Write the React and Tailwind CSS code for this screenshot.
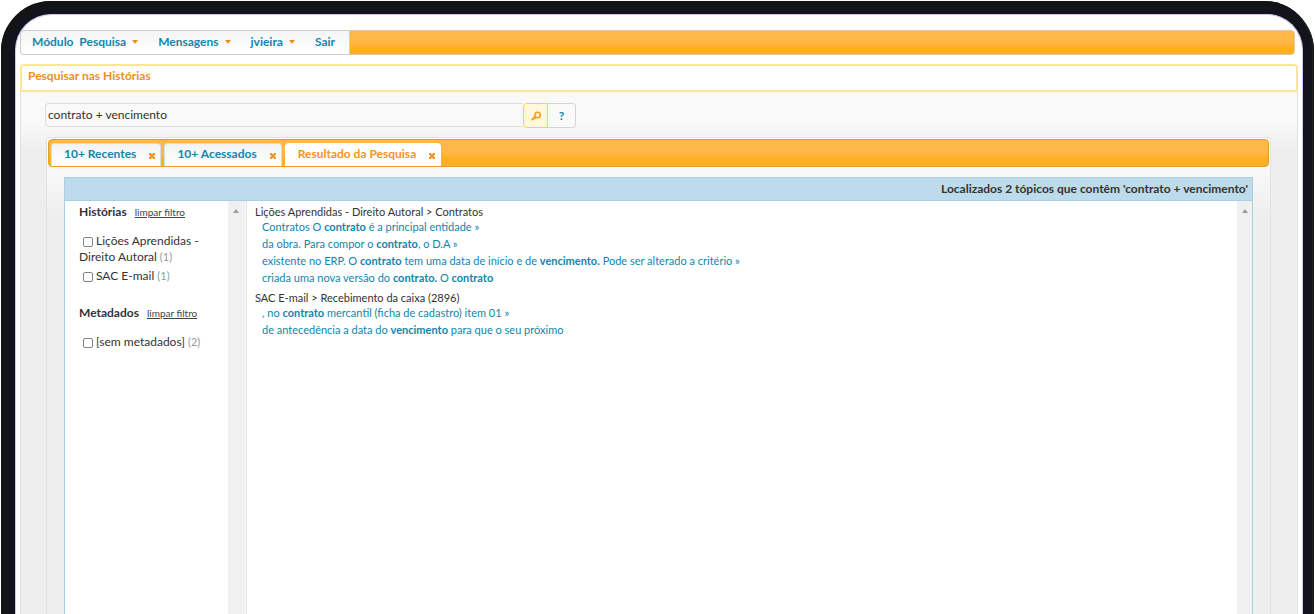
import React from "react";

const menuItems = [
  { label: "Módulo  Pesquisa", hasMenu: true },
  { label: "Mensagens", hasMenu: true },
  { label: "jvieira", hasMenu: true },
  { label: "Sair", hasMenu: false },
];

const tabs = [
  { label: "10+ Recentes", active: false },
  { label: "10+ Acessados", active: false },
  { label: "Resultado da Pesquisa", active: true },
];

const results = [
  {
    title: "Lições Aprendidas - Direito Autoral > Contratos",
    excerpts: [
      <>Contratos O <b>contrato</b> é a principal entidade »</>,
      <>da obra. Para compor o <b>contrato</b>, o D.A »</>,
      <>existente no ERP. O <b>contrato</b> tem uma data de início e de <b>vencimento.</b> Pode ser alterado a critério »</>,
      <>criada uma nova versão do <b>contrato.</b> O <b>contrato</b></>,
    ],
  },
  {
    title: "SAC E-mail > Recebimento da caixa (2896)",
    excerpts: [
      <>, no <b>contrato</b> mercantil (ficha de cadastro) item 01 »</>,
      <>de antecedência a data do <b>vencimento</b> para que o seu próximo</>,
    ],
  },
];

function Caret() {
  return (
    <svg viewBox="0 0 6 4" className="h-1 w-1.5 fill-[#f58d1e]" aria-hidden="true">
      <path d="M0 0h6L3 4z" />
    </svg>
  );
}

function SearchIcon() {
  return (
    <svg viewBox="0 0 12 12" className="size-3 fill-none stroke-[#ff9a1f]" aria-hidden="true">
      <circle cx="7.6" cy="5" r="2.7" strokeWidth="1.6" />
      <path d="M5.6 7.2L1.6 9.8" strokeWidth="2" />
      <path d="M3.6 6.6l2.2 2.4" strokeWidth="1" />
    </svg>
  );
}

function CloseIcon() {
  return (
    <svg viewBox="0 0 8 8" className="size-2 fill-none stroke-[#f7931e]" aria-hidden="true">
      <path d="M1.6 1.5l4.8 5M6.4 1.5L1.6 6.5" strokeWidth="2.2" />
      <path d="M1 1.5h2M5 1.5h2M1 6.5h2M5 6.5h2" strokeWidth="1" />
    </svg>
  );
}

function ScrollTrack({ className = "" }) {
  return (
    <div className={`flex shrink-0 justify-center bg-[#f0f0f0] pt-2 ${className}`}>
      <svg viewBox="0 0 6 4" className="h-1 w-1.5 fill-[#9b9b9b]" aria-hidden="true">
        <path d="M0 4h6L3 0z" />
      </svg>
    </div>
  );
}

function FilterHeading({ children }) {
  return (
    <div className="flex items-baseline gap-2">
      <h2 className="text-xs font-bold leading-4">{children}</h2>
      <button type="button" className="text-[10px] leading-4 text-[#444] underline underline-offset-1">
        limpar filtro
      </button>
    </div>
  );
}

function FilterOption({ label, count }) {
  return (
    <label className="block text-xs leading-4">
      <input
        type="checkbox"
        className="mr-[3px] ml-1 size-2.5 appearance-none rounded-[2px] border border-[#858585] bg-white align-[-2px]"
      />
      {label} <span className="text-[11px] text-[#999]">({count})</span>
    </label>
  );
}

export default function App() {
  return (
    <div className="flex min-h-screen bg-white px-px pt-px font-['Lato','Open_Sans',sans-serif] text-xs text-[#333]">
      <div className="flex min-w-0 flex-1 rounded-t-[50px] bg-[#11151b] pt-[13px] pr-[11px] pl-3.5 shadow-[inset_3px_3px_0_#131513,inset_-2px_0_0_#1a1c1d]">
        <main className="flex min-w-0 flex-1 flex-col rounded-t-[36px] border border-b-0 border-[#d3c2f2] bg-white pt-[15px] pr-1 pl-1">
          <nav className="mr-[3px] flex h-[25px] rounded-sm border border-[#dcc9a4] bg-linear-to-b from-[#ffb847] from-50% to-[#ffaf22] to-70%">
            <div className="-my-px -ml-px flex items-center gap-5 rounded-l-sm border border-[#cfcfcf] bg-linear-to-b from-[#f5f5f5] to-white pr-3.5 pb-px pl-[11px]">
              {menuItems.map((item) => (
                <button
                  key={item.label}
                  type="button"
                  className="flex items-center gap-1.5 font-bold leading-4 whitespace-pre text-[#1186ab]"
                >
                  {item.label}
                  {item.hasMenu && <Caret />}
                </button>
              ))}
            </div>
          </nav>

          <section className="mt-[9px] flex flex-1 flex-col">
            <h1 className="h-7 rounded-t-sm border-2 border-[#fbe795] bg-white px-1.5 text-xs font-bold leading-5 text-[#ef8f17]">
              Pesquisar nas Histórias
            </h1>
            <div className="flex flex-1 flex-col border-x border-[#e0e0e0] bg-[#eee] bg-linear-to-b from-[#f9f9f9] from-50% to-[#eee] bg-[length:100%_60px] bg-no-repeat pt-[11px] pr-[26px] pl-6">
              <form className="flex" onSubmit={(event) => event.preventDefault()}>
                <input
                  type="text"
                  aria-label="Pesquisar"
                  defaultValue="contrato + vencimento"
                  className="h-6 w-[478px] rounded-l-sm border border-r-0 border-[#dedede] bg-[#f9f9f9] px-0.5 pb-0.5 text-xs outline-none"
                />
                <button
                  type="submit"
                  aria-label="Buscar"
                  className="flex h-[25px] w-[25px] items-center justify-center rounded-l-sm border border-[#fad63c] bg-[#fff8dc]"
                >
                  <SearchIcon />
                </button>
                <button
                  type="button"
                  aria-label="Ajuda"
                  className="h-[25px] w-7 rounded-r-sm border border-l-0 border-[#d4d4d4] bg-[#fafafa] font-bold text-[#1186ab]"
                >
                  ?
                </button>
              </form>

              <div className="mt-[9px] ml-px flex flex-1 flex-col rounded-t-sm border border-b-0 border-[#e1e1e1] bg-[#eee] bg-linear-to-b from-white to-[#eee] bg-[length:100%_80px] bg-no-repeat px-px pt-px">
                <div
                  className="flex h-7 items-end gap-[3px] rounded-sm border border-[#e99a2c] bg-linear-to-b from-[#ffb847] from-50% to-[#ffaf22] to-70% px-0.5"
                  role="tablist"
                >
                  {tabs.map((tab) => (
                    <div
                      key={tab.label}
                      className={`flex h-[23px] items-start gap-3 rounded-t-sm border border-b-0 pt-0.5 pr-1 pl-3 ${
                        tab.active ? "border-white bg-white" : "border-[#ddd] bg-linear-to-b from-[#f3f3f3] to-white"
                      }`}
                    >
                      <button
                        type="button"
                        role="tab"
                        aria-selected={tab.active}
                        className={`font-bold leading-4 ${tab.active ? "text-[#f7931e]" : "text-[#1186ab]"}`}
                      >
                        {tab.label}
                      </button>
                      <button type="button" aria-label={`Fechar ${tab.label}`} className="pt-1.5">
                        <CloseIcon />
                      </button>
                    </div>
                  ))}
                </div>

                <div className="mx-4 mt-2.5 flex flex-1 flex-col border border-b-0 border-[#a9cfe3] bg-white">
                  <p className="h-[23px] border-b border-[#a9cfe3] bg-[#bedbec] px-1 text-right font-bold leading-[22px]">
                    Localizados 2 tópicos que contêm 'contrato + vencimento'
                  </p>
                  <div className="flex flex-1">
                    <aside className="w-[163px] shrink-0 pt-[3px] pl-3.5">
                      <FilterHeading>Histórias</FilterHeading>
                      <div className="flex flex-col gap-[3px] pt-[13px] pr-3 pb-[21px]">
                        <FilterOption label="Lições Aprendidas - Direito Autoral" count={1} />
                        <FilterOption label="SAC E-mail" count={1} />
                      </div>
                      <FilterHeading>Metadados</FilterHeading>
                      <div className="pt-[13px]">
                        <FilterOption label="[sem metadados]" count={2} />
                      </div>
                    </aside>
                    <ScrollTrack className="w-4" />
                    <div className="w-[3px] shrink-0 border-r border-[#e6e6e6] bg-[#f4f4f4]" />
                    <div className="min-w-0 flex-1 pt-1 pl-2">
                      {results.map((result) => (
                        <article key={result.title} className="pb-[5px]">
                          <h3 className="text-[11px] leading-[13px]">{result.title}</h3>
                          <ul className="pl-[7px]">
                            {result.excerpts.map((excerpt, index) => (
                              <li key={index} className="text-[11px] leading-[17px]">
                                <a href="#" className="text-[#1186ab]">
                                  {excerpt}
                                </a>
                              </li>
                            ))}
                          </ul>
                        </article>
                      ))}
                    </div>
                    <ScrollTrack className="w-[15px]" />
                  </div>
                </div>
              </div>
            </div>
          </section>
        </main>
      </div>
    </div>
  );
}
